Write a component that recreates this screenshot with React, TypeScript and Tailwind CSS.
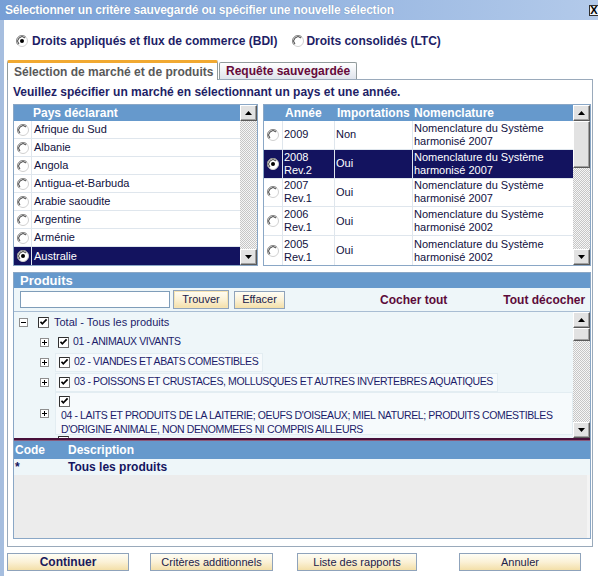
import React from 'react'

const FONT = "font-['Liberation_Sans',Arial,sans-serif]"
const HEAD = 'bg-[#6699cc]'
const TRACK = 'bg-[image:repeating-conic-gradient(#c6c6c6_0%_25%,#f6f6f6_0%_50%)] bg-[length:2px_2px]'

function Radio({ checked = false }: { checked?: boolean }) {
  return (
    <svg width="12" height="12" viewBox="0 0 12 12" className="block shrink-0">
      <circle cx="6" cy="6" r="5.5" fill="#fff" stroke="#d0d0d0" />
      <path d="M2.1 9.9 A5.5 5.5 0 0 1 9.9 2.1" stroke="#8a8a8a" fill="none" />
      <path d="M2.96 9.04 A4.3 4.3 0 0 1 9.04 2.96" stroke="#404040" fill="none" />
      {checked && <circle cx="6" cy="6" r="2" fill="#000" />}
    </svg>
  )
}

function Check() {
  return (
    <svg width="11" height="11" viewBox="0 0 11 11" className="block shrink-0">
      <rect x="0.5" y="0.5" width="10" height="10" fill="#fff" stroke="#6d6d6d" />
      <path d="M0.5 10.5 V0.5 H10.5" stroke="#303030" fill="none" />
      <path d="M2.5 4.8 L4.3 6.8 L8.6 2.4" stroke="#000" strokeWidth="1.7" fill="none" />
    </svg>
  )
}

function Expander({ open = false }: { open?: boolean }) {
  return (
    <svg width="9" height="9" viewBox="0 0 9 9" className="block shrink-0">
      <rect x="0.5" y="0.5" width="8" height="8" fill="#fff" stroke="#8e8e8e" />
      <path d="M2 4.5 H7" stroke="#000" />
      {!open && <path d="M4.5 2 V7" stroke="#000" />}
    </svg>
  )
}

function ArrowBtn({ up = false }: { up?: boolean }) {
  return (
    <div className="h-[16px] shrink-0 flex items-center justify-center bg-[#e2e2e2] border border-t-white border-l-white border-b-[#5a5a5a] border-r-[#5a5a5a] shadow-[inset_-1px_-1px_0_#a0a0a0]">
      <svg width="7" height="4" viewBox="0 0 7 4">
        {up ? <path d="M0 4 L3.5 0 L7 4 Z" fill="#000" /> : <path d="M0 0 L3.5 4 L7 0 Z" fill="#000" />}
      </svg>
    </div>
  )
}

function Thumb({ className }: { className: string }) {
  return (
    <div className={`${className} shrink-0 bg-[#e2e2e2] border border-t-white border-l-white border-b-[#5a5a5a] border-r-[#5a5a5a] shadow-[inset_-1px_-1px_0_#a0a0a0]`} />
  )
}

function Scroll({ thumb }: { thumb: string }) {
  return (
    <div className={`w-[17px] shrink-0 flex flex-col ${TRACK}`}>
      <ArrowBtn up />
      <Thumb className={thumb} />
      <div className="flex-1" />
      <ArrowBtn />
    </div>
  )
}

function XpButton({ children, className = '', bold = false }: { children: React.ReactNode; className?: string; bold?: boolean }) {
  return (
    <div
      className={`h-[18px] flex items-center justify-center border border-[#8fa3bb] bg-gradient-to-b from-[#fffdf5] via-[#fbf1d6] to-[#f3dfa8] ${bold ? 'font-bold text-[12px] text-[#1a1a5c]' : 'text-[11px] text-[#22224a]'} ${className}`}
    >
      {children}
    </div>
  )
}

const countries = ['Afrique du Sud', 'Albanie', 'Angola', 'Antigua-et-Barbuda', 'Arabie saoudite', 'Argentine', 'Arménie', 'Australie']

const years = [
  { y: ['2009'], imp: 'Non', nom: '2007' },
  { y: ['2008', 'Rev.2'], imp: 'Oui', nom: '2007', sel: true },
  { y: ['2007', 'Rev.1'], imp: 'Oui', nom: '2007' },
  { y: ['2006', 'Rev.1'], imp: 'Oui', nom: '2002' },
  { y: ['2005', 'Rev.1'], imp: 'Oui', nom: '2002' },
]

const products = [
  { code: '01 - ANIMAUX VIVANTS', box: false },
  { code: '02 - VIANDES ET ABATS COMESTIBLES', box: true },
  { code: '03 - POISSONS ET CRUSTACES, MOLLUSQUES ET AUTRES INVERTEBRES AQUATIQUES', box: true },
]

export default function App() {
  return (
    <div className={`w-[598px] h-[576px] bg-white flex flex-col overflow-hidden text-[#151550] ${FONT}`}>
      {/* title bar */}
      <div className="h-[20px] shrink-0 flex items-center justify-between pl-[5px] bg-gradient-to-r from-[#779fd6] to-[#b3caea]">
        <span className="text-white font-bold text-[12px] tracking-[-0.2px] [text-shadow:0_0_1px_#5b7fb0]">
          Sélectionner un critère sauvegardé ou spécifier une nouvelle sélection
        </span>
        <div className="w-[10px] h-[11px] mr-[-1px] flex items-center justify-center bg-[#eef3fa] border border-[#303030] text-[11px] font-bold leading-none text-black">
          X
        </div>
      </div>

      <div className="flex flex-1">
        <div className="w-[4px] bg-[#a6bedf] shrink-0" />
        <div className="flex-1 flex flex-col pl-[3px] pr-[5px]">
          {/* radio choice */}
          <div className="h-[18px] mt-[12px] flex items-center text-[12px] font-bold text-[#1e1e66]">
            <div className="ml-[9px]"><Radio checked /></div>
            <span className="ml-[4px]">Droits appliqués et flux de commerce (BDI)</span>
            <div className="ml-[15px]"><Radio /></div>
            <span className="ml-[2px]">Droits consolidés (LTC)</span>
          </div>

          {/* tabs */}
          <div className="flex items-end h-[19px] mt-[10px] relative z-10">
            <div className="w-[211px] h-[20px] mb-[-1px] bg-white border border-[#919b9c] border-b-0 border-t-[3px] border-t-[#f1a931] rounded-t-[2px] flex items-center pl-[6px] text-[12px] font-bold text-[#595959]">
              Sélection de marché et de produits
            </div>
            <div className="w-[138px] h-[17px] ml-[1px] bg-gradient-to-b from-white to-[#dfe4ec] border border-[#919b9c] border-b-0 rounded-t-[2px] flex items-center pl-[6px] text-[12px] font-bold text-[#660a3a]">
              Requête sauvegardée
            </div>
          </div>

          {/* panel */}
          <div className="h-[468px] border border-[#9aaabb] flex flex-col pl-[5px] pr-[1px]">
            <div className="h-[24px] flex items-center text-[12px] font-bold text-[#1e1e66]">
              Veuillez spécifier un marché en sélectionnant un pays et une année.
            </div>

            <div className="flex gap-[5px] h-[162px]">
              {/* countries */}
              <div className="w-[245px] flex border border-[#8aa7c6]">
                <div className="flex-1 flex flex-col">
                  <div className={`h-[16px] ${HEAD} flex items-center pl-[19px] text-[12px] font-bold text-white`}>Pays déclarant</div>
                  {countries.map((c, i) => {
                    const sel = i === countries.length - 1
                    return (
                      <div key={c} className={`h-[18px] flex border-b border-[#dfe6ed] last:border-b-0 text-[11px] ${sel ? 'bg-[#13135f] text-white' : 'bg-white text-[#101040]'}`}>
                        <div className="w-[18px] flex items-center justify-center border-r border-[#dfe6ed]">
                          <Radio checked={sel} />
                        </div>
                        <div className="flex items-center pl-[2px]">{c}</div>
                      </div>
                    )
                  })}
                </div>
                <Scroll thumb="h-0 hidden" />
              </div>

              {/* years */}
              <div className="flex-1 flex border border-[#8aa7c6]">
                <div className="flex-1 flex flex-col">
                  <div className={`h-[16px] ${HEAD} flex items-center text-[12px] font-bold text-white`}>
                    <div className="w-[19px]" />
                    <div className="w-[52px] pl-[2px]">Année</div>
                    <div className="w-[78px] pl-[2px]">Importations</div>
                    <div className="pl-[1px]">Nomenclature</div>
                  </div>
                  {years.map((r) => (
                    <div key={r.y.join()} className={`h-[29px] flex border-b border-[#dfe6ed] last:border-b-0 text-[11px] leading-[13px] ${r.sel ? 'bg-[#13135f] text-white' : 'bg-white text-[#101040]'}`}>
                      <div className="w-[19px] flex items-center justify-center border-r border-[#dfe6ed]">
                        <Radio checked={r.sel} />
                      </div>
                      <div className="w-[52px] flex flex-col justify-center pl-[1px] border-r border-[#dfe6ed]">
                        {r.y.map((t) => <span key={t}>{t}</span>)}
                      </div>
                      <div className="w-[78px] flex items-center pl-[1px] border-r border-[#dfe6ed]">{r.imp}</div>
                      <div className="flex flex-col justify-center pl-[1px]">
                        <span>Nomenclature du Système</span>
                        <span>harmonisé {r.nom}</span>
                      </div>
                    </div>
                  ))}
                </div>
                <Scroll thumb="h-[47px]" />
              </div>
            </div>

            {/* produits */}
            <div className="h-[267px] mt-[6px] border border-[#8aa7c6] flex flex-col">
              <div className={`h-[15px] ${HEAD} flex items-center pl-[6px] text-[13px] font-bold text-white`}>Produits</div>
              <div className="h-[24px] bg-[#eef6f9] border-b border-[#a8bdd3] flex items-center pl-[6px] text-[12px]">
                <div className="w-[150px] h-[17px] bg-white border border-[#7f9db9]" />
                <XpButton className="w-[56px] ml-[3px] !h-[19px] border-[#1c1c3a] shadow-[inset_0_0_0_1px_#f5e3b3]">Trouver</XpButton>
                <XpButton className="w-[51px] ml-[5px]">Effacer</XpButton>
                <span className="ml-[95px] font-bold text-[#5c0b3a]">Cocher tout</span>
                <span className="ml-[56px] font-bold text-[#5c0b3a]">Tout décocher</span>
              </div>

              <div className="h-[126px] flex bg-[#eef6f9]">
                <div className="flex-1 overflow-hidden text-[11px] text-[#1c1c6a]">
                  <div className="h-[20px] flex items-center pl-[5px]">
                    <Expander open />
                    <div className="ml-[10px]"><Check /></div>
                    <span className="ml-[5px]">Total - Tous les produits</span>
                  </div>
                  {products.map((p) => (
                    <div key={p.code} className="h-[20px] flex items-center pl-[26px]">
                      <Expander />
                      <div className={`ml-[6px] h-[19px] flex items-center pl-[3px] pr-[4px] ${p.box ? 'bg-[#f6fafc] border border-[#e3edf2]' : ''}`}>
                        <Check />
                        <span className="ml-[4px] text-[10.5px] tracking-[-0.38px]">{p.code}</span>
                      </div>
                    </div>
                  ))}
                  <div className="h-[43px] flex items-center pl-[26px]">
                    <Expander />
                    <div className="ml-[6px] h-[43px] flex-1 bg-[#f6fafc] border border-[#e3edf2] pl-[3px] pt-[3px]">
                      <Check />
                      <div className="pl-[2px] leading-[14px] text-[10.5px] tracking-[-0.38px] mt-[1px]">
                        04 - LAITS ET PRODUITS DE LA LAITERIE; OEUFS D'OISEAUX; MIEL NATUREL; PRODUITS COMESTIBLES D'ORIGINE ANIMALE, NON DENOMMEES NI COMPRIS AILLEURS
                      </div>
                    </div>
                  </div>
                  <div className="h-[20px] flex pl-[26px] pt-[1px]">
                    <div className="ml-[18px]"><Check /></div>
                  </div>
                </div>
                <Scroll thumb="h-[13px]" />
              </div>

              <div className="h-[3px] bg-[#47103a] border-b border-[#8a5a7a]" />

              <div className={`h-[18px] ${HEAD} flex items-center text-[12px] font-bold text-white`}>
                <div className="w-[54px] pl-[1px]">Code</div>
                <div>Description</div>
              </div>
              <div className="h-[16px] bg-[#eef6f9] flex items-center text-[12px] font-bold text-[#151560]">
                <div className="w-[54px] pl-[1px]">*</div>
                <div>Tous les produits</div>
              </div>
              <div className="flex-1 bg-[#ececec] border-r-[3px] border-[#f4f4f4]" />
            </div>
          </div>

          {/* buttons */}
          <div className="flex mt-[6px]">
            <XpButton bold className="w-[122px]">Continuer</XpButton>
            <XpButton className="w-[123px] ml-[21px]">Critères additionnels</XpButton>
            <XpButton className="w-[120px] ml-[24px]">Liste des rapports</XpButton>
            <XpButton className="w-[122px] ml-[42px]">Annuler</XpButton>
          </div>
        </div>
      </div>
    </div>
  )
}
